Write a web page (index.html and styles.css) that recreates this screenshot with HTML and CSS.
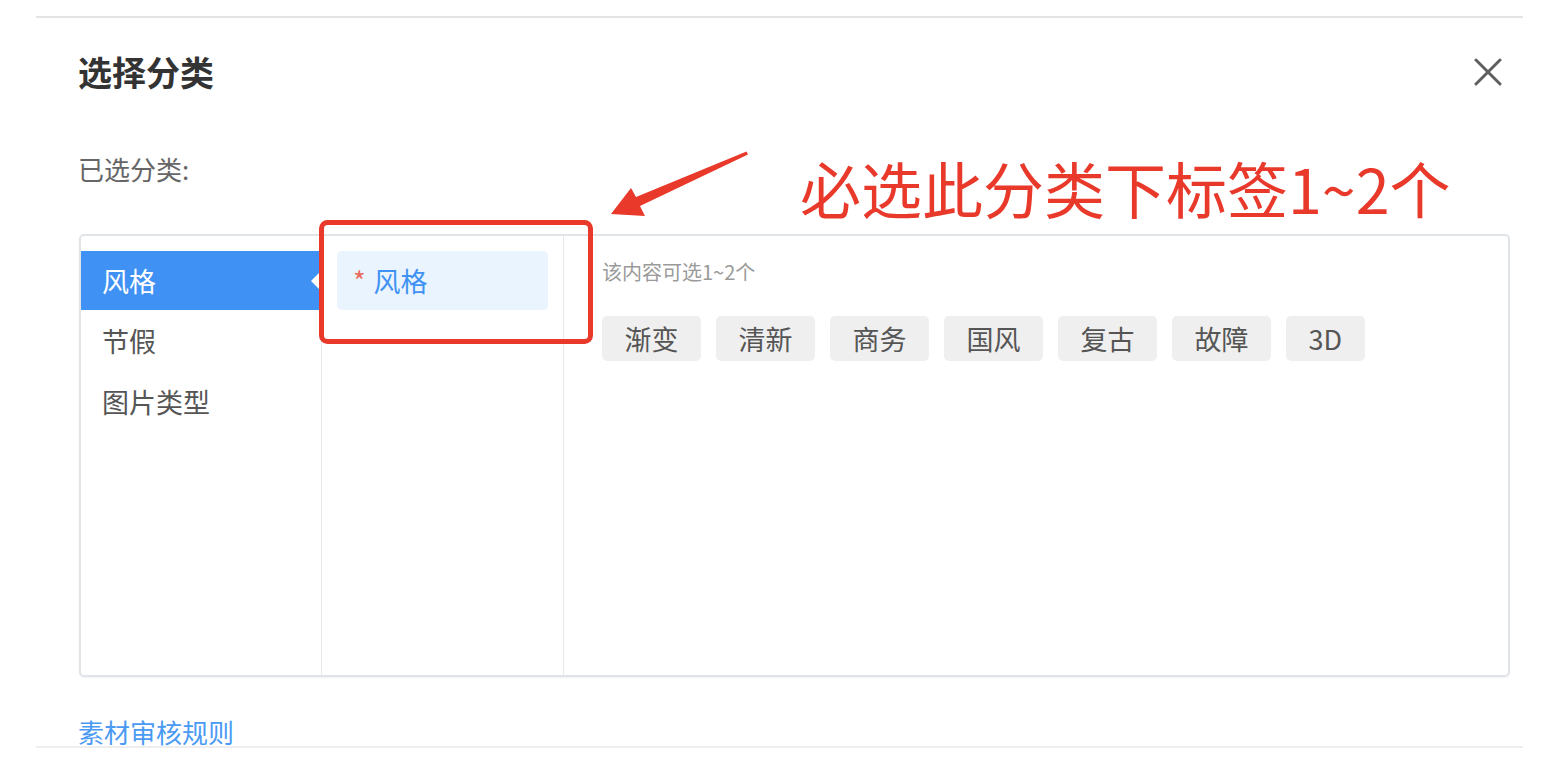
FILE: index.html
```html
<!DOCTYPE html>
<html lang="zh-CN">
<head>
    <meta charset="UTF-8">
    <meta name="viewport" content="width=device-width, initial-scale=1.0">
    <title>选择分类</title>
    <link rel="stylesheet" href="styles.css">
</head>
<body>
    <div class="dialog">
        <!-- Header -->
        <div class="dialog-header">
            <div class="dialog-title">选择分类</div>
            <svg class="close" width="28" height="28" viewBox="0 0 28 28">
                <path d="M2 2 L26 26 M26 2 L2 26" stroke="#5f5f5f" stroke-width="3" stroke-linecap="round" fill="none"/>
            </svg>
        </div>

        <div class="picked">已选分类:</div>

        <!-- Category picker -->
        <div class="picker">
            <div class="col col-first">
                <div class="cat active">风格</div>
                <div class="cat">节假</div>
                <div class="cat">图片类型</div>
            </div>
            <div class="col col-second">
                <div class="sub"><span class="star">*</span>风格</div>
            </div>
            <div class="col col-tags">
                <div class="hint">该内容可选1~2个</div>
                <div class="tags">
                    <span class="tag">渐变</span>
                    <span class="tag">清新</span>
                    <span class="tag">商务</span>
                    <span class="tag">国风</span>
                    <span class="tag">复古</span>
                    <span class="tag">故障</span>
                    <span class="tag">3D</span>
                </div>
            </div>
        </div>

        <a class="rules" href="#">素材审核规则</a>
    </div>

    <!-- Red annotation on top -->
    <svg class="mark" width="1554" height="784" viewBox="0 0 1554 784">
        <rect x="321.5" y="222.5" width="269" height="119" rx="6" ry="6" fill="none" stroke="#e8392b" stroke-width="5"/>
        <polygon points="611,214 631,188 636,197 746.5,151.5 748,154.5 640,206 645,216" fill="#e8392b"/>
    </svg>
    <div class="note">必选此分类下标签1~2个</div>
</body>
</html>
```

FILE: styles.css
```css
body, html {
    margin: 0;
    padding: 0;
    background: #fff;
    font-family: "Noto Sans CJK SC", "Noto Sans", sans-serif;
}
.dialog {
    box-sizing: border-box;
    width: 1487px;
    margin: 16px 0 0 36px;
    padding: 37px 13px 1px 42px;
    border-top: 2px solid #e4e4e4;
    border-bottom: 2px solid #eeeeee;
    display: flex;
    flex-direction: column;
}
.dialog-header {
    display: flex;
    justify-content: space-between;
    align-items: center;
    height: 34px;
}
.dialog-title {
    font-size: 34px;
    line-height: 34px;
    font-weight: bold;
    color: #333;
}
.close {
    margin-right: 8px;
}
.picked {
    margin-top: 67px;
    font-size: 26px;
    line-height: 26px;
    color: #666;
}
.picker {
    box-sizing: border-box;
    margin: 52px 0 0 1px;
    height: 443px;
    border: 2px solid #e0e4e9;
    border-radius: 5px;
    box-shadow: 0 1px 2px rgba(0, 0, 0, 0.06);
    display: flex;
}
.col {
    box-sizing: border-box;
    padding-top: 15px;
}
.col-first {
    width: 241px;
    border-right: 1px solid #e6e9ed;
}
.col-second {
    width: 242px;
    padding-left: 15px;
    padding-right: 15px;
    border-right: 1px solid #e6e9ed;
}
.col-tags {
    flex: 1;
    padding: 26px 0 0 38px;
}
.cat {
    position: relative;
    height: 61px;
    line-height: 61px;
    padding-left: 21px;
    font-size: 27px;
    color: #555;
}
.cat.active {
    height: 59px;
    line-height: 59px;
    background: #3f92f4;
    color: #fff;
}
.cat.active::after {
    content: "";
    position: absolute;
    right: 0;
    top: 50%;
    margin-top: -10px;
    border-right: 10px solid #fff;
    border-top: 10px solid transparent;
    border-bottom: 10px solid transparent;
}
.sub {
    height: 59px;
    line-height: 59px;
    padding-left: 16px;
    border-radius: 5px;
    background: #eaf4fe;
    color: #3f92f4;
    font-size: 27px;
}
.star {
    color: #e86b5f;
    font-size: 27px;
    margin-right: 8px;
}
.hint {
    font-size: 20px;
    line-height: 20px;
    color: #9a9a9a;
}
.tags {
    margin-top: 34px;
    display: flex;
    gap: 15px;
}
.tag {
    height: 45px;
    line-height: 45px;
    padding: 0 22.5px;
    border-radius: 5px;
    background: #efefef;
    color: #555;
    font-size: 27px;
}
.rules {
    margin-top: 42px;
    font-size: 26px;
    line-height: 26px;
    color: #4a9af3;
    text-decoration: none;
}
.mark {
    position: absolute;
    top: 0;
    left: 0;
    pointer-events: none;
}
.note {
    position: absolute;
    left: 800px;
    top: 157px;
    font-size: 61px;
    line-height: 61px;
    color: #e8392b;
    white-space: nowrap;
}
```
